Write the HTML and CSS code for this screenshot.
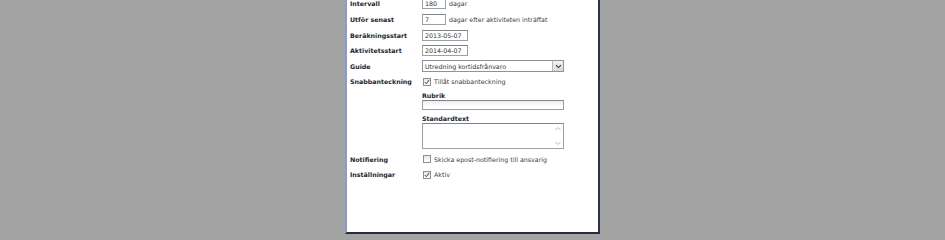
FILE: index.html
```html
<!DOCTYPE html>
<html lang="sv">
<head>
<meta charset="utf-8">
<title>Aktivitet</title>
<link rel="stylesheet" href="styles.css">
</head>
<body>
<div class="dialog">
  <div class="row">
    <div class="lbl">Intervall</div>
    <div class="fld"><span class="inp w-s">180</span><span class="txt">dagar</span></div>
  </div>
  <div class="row">
    <div class="lbl">Utför senast</div>
    <div class="fld"><span class="inp w-s">7</span><span class="txt">dagar efter aktiviteten inträffat</span></div>
  </div>
  <div class="row">
    <div class="lbl">Beräkningsstart</div>
    <div class="fld"><span class="inp w-d">2013-05-07</span></div>
  </div>
  <div class="row">
    <div class="lbl">Aktivitetsstart</div>
    <div class="fld"><span class="inp w-d">2014-04-07</span></div>
  </div>
  <div class="row">
    <div class="lbl">Guide</div>
    <div class="fld">
      <span class="select"><span class="sel-val">Utredning kortidsfrånvaro</span><span class="sel-btn"><svg width="7" height="5" viewBox="0 0 7 5"><path d="M1 1.2 L3.5 3.6 L6 1.2" fill="none" stroke="#333" stroke-width="1.1"/></svg></span></span>
    </div>
  </div>
  <div class="row row-tall">
    <div class="lbl">Snabbanteckning</div>
    <div class="fld fld-col">
      <div class="chk-line"><span class="chk on"><svg width="6" height="6" viewBox="0 0 6 6"><path d="M0.8 3.1 L2.3 4.7 L5.2 0.9" fill="none" stroke="#2d3a4a" stroke-width="1"/></svg></span><span class="txt">Tillåt snabbanteckning</span></div>
      <div class="sub-lbl">Rubrik</div>
      <span class="inp w-l grad"></span>
      <div class="sub-lbl sub-lbl2">Standardtext</div>
      <span class="area">
        <span class="scroll">
          <svg width="8" height="22" viewBox="0 0 8 22"><path d="M1.5 5 L4 2.5 L6.5 5" fill="none" stroke="#b8b8b8" stroke-width="1"/><path d="M1.5 17 L4 19.5 L6.5 17" fill="none" stroke="#b8b8b8" stroke-width="1"/></svg>
        </span>
      </span>
    </div>
  </div>
  <div class="row">
    <div class="lbl">Notifiering</div>
    <div class="fld"><span class="chk"></span><span class="txt">Skicka epost-notifiering till ansvarig</span></div>
  </div>
  <div class="row">
    <div class="lbl">Inställningar</div>
    <div class="fld"><span class="chk on"><svg width="6" height="6" viewBox="0 0 6 6"><path d="M0.8 3.1 L2.3 4.7 L5.2 0.9" fill="none" stroke="#2d3a4a" stroke-width="1"/></svg></span><span class="txt">Aktiv</span></div>
  </div>
</div>
</body>
</html>
```

FILE: styles.css
```css
html, body {
  margin: 0;
  padding: 0;
  background: #a3a3a3;
  overflow: hidden;
}

body {
  width: 945px;
  height: 234px;
  font-family: "DejaVu Sans", Verdana, sans-serif;
  font-size: 6.3px;
  color: #333;
}

.dialog {
  box-sizing: border-box;
  margin-left: 345px;
  margin-top: -20px;
  width: 255px;
  height: 254px;
  background: #ffffff;
  border-left: 2px solid #8a9ccb;
  border-right: 2px solid #2c3550;
  border-bottom: 2px solid #262c40;
  padding-top: 16.2px;
  padding-left: 3px;
}

.row {
  display: flex;
  align-items: center;
  height: 15.6px;
}

.row-tall {
  height: auto;
  align-items: flex-start;
  margin-bottom: 2.2px;
}

.row-tall .lbl {
  height: 15.6px;
  display: flex;
  align-items: center;
}

.lbl {
  width: 72px;
  flex: none;
  font-weight: bold;
  color: #1c1f2e;
}

.fld {
  display: flex;
  align-items: center;
}

.fld-col {
  flex-direction: column;
  align-items: flex-start;
}

.txt {
  margin-left: 3px;
  color: #3a3a3a;
}

.inp {
  box-sizing: border-box;
  display: inline-flex;
  align-items: center;
  height: 11px;
  padding-left: 2px;
  border: 1px solid #9aa0a6;
  border-top-color: #7f858c;
  background: #fff;
  color: #333;
}

.w-s { width: 24px; }
.w-d { width: 46px; }
.w-l { width: 142px; height: 10px; }

.grad {
  background: linear-gradient(#ececec, #ffffff 60%);
}

.select {
  box-sizing: border-box;
  display: inline-flex;
  width: 142px;
  height: 12px;
  border: 1px solid #8d939a;
  background: #fff;
}

.sel-val {
  flex: 1;
  display: flex;
  align-items: center;
  padding-left: 2px;
  color: #333;
}

.sel-btn {
  box-sizing: border-box;
  width: 11px;
  display: flex;
  align-items: center;
  justify-content: center;
  border-left: 1px solid #b5b9bd;
  background: linear-gradient(#f3f3f3, #d9d9d9);
}

.chk-line {
  display: flex;
  align-items: center;
  height: 15.6px;
}

.chk {
  box-sizing: border-box;
  display: inline-flex;
  align-items: center;
  justify-content: center;
  width: 8px;
  height: 8px;
  margin-left: 1px;
  border: 1px solid #8e8f8f;
  background: linear-gradient(#e6e6e6, #ffffff);
}

.chk + .txt {
  margin-left: 3px;
}

.sub-lbl {
  font-weight: bold;
  color: #1c1f2e;
  height: 9.6px;
  line-height: 9.6px;
  margin-top: 1px;
}

.sub-lbl2 {
  margin-top: 3.4px;
}

.area {
  box-sizing: border-box;
  display: flex;
  justify-content: flex-end;
  width: 142px;
  height: 26px;
  border: 1px solid #9aa0a6;
  border-top-color: #7f858c;
  background: #fff;
}

.scroll {
  width: 10px;
  display: flex;
  align-items: center;
  justify-content: center;
}
```
